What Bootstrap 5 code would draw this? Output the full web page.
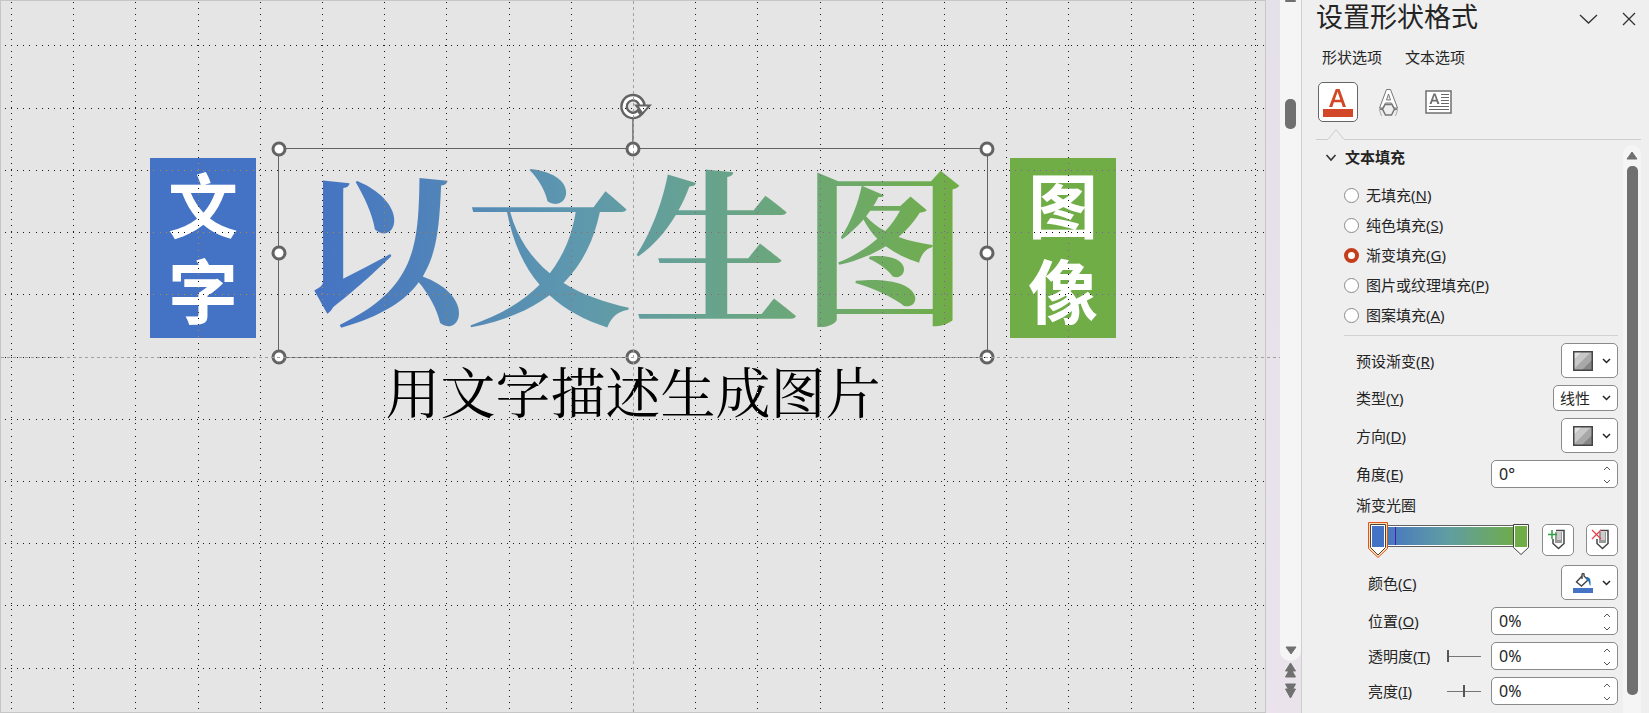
<!DOCTYPE html>
<html lang="zh-CN">
<head>
<meta charset="utf-8">
<meta name="viewport" content="width=device-width, initial-scale=1">
<title>设置形状格式</title>
<link href="https://cdn.jsdelivr.net/npm/bootstrap@5.3.0/dist/css/bootstrap.min.css" rel="stylesheet">
<style>
body{font-family:"Noto Sans","Noto Sans CJK SC",sans-serif;font-size:15px;line-height:20px;color:#242424;background:#efefef}
svg{display:block}
.slide{background:#e5e5e5;border:1px solid #c6c6c6;isolation:isolate;padding-top:147px;min-width:0}
.objects{gap:22px}
.tile{width:106px;height:180px;margin-top:10px;padding-top:2px;color:#fff;font-size:70px;line-height:86px;font-weight:700;font-family:"Noto Sans CJK SC",sans-serif}
.tile-blue{background:#4472c4}
.tile-green{background:#70ad47}
.selection{width:710px;height:210px;border:1px solid #636363}
.headline{font:700 168px/182px "Noto Serif CJK SC","Noto Sans CJK SC",serif;background:linear-gradient(90deg,#4472c4 4%,#5e98ae 42%,#67a38f 60%,#6fab60 85%,#70ad47 95%);-webkit-background-clip:text;background-clip:text;color:transparent}
.caption{font:400 55px/64px "Noto Serif CJK SC","Noto Sans CJK SC",serif;color:#000}
.grip{position:absolute;width:15px;height:15px;border:3px solid #636363;border-radius:50%;background:#fff;transform:translate(-50%,-50%)}
.turn{position:absolute;left:50%;bottom:100%;transform:translateX(-50%)}
.guides{position:absolute;inset:0;pointer-events:none}
.grid-dots{mix-blend-mode:difference}
.strip{width:35px;background:linear-gradient(#e5e1e9,#eae3eb)}
.strip-track{width:21px;background:#f5f5f5;border-radius:0 0 10px 10px;height:calc(100% - 52px)}
.thumb{width:11px;border-radius:5px;background:#707070}
.strip-thumb{height:30px;margin-top:97px}
.pane{width:348px;border-left:1px solid #cfcfcf;padding:0 8px 0 14px;background:#efefef}
.pane-title{font-size:27px;line-height:34px;font-weight:400;color:#242424}
.plain{background:none;border:0;padding:0;color:#242424}
.pane-tools{gap:24px;padding:3px 5px 0 0}
.pane-tabs{gap:23px;padding:11px 6px 0}
.pane-tabs a{color:#242424;text-decoration:none;line-height:24px}
.icon-row{margin-top:13px;padding-left:2px;gap:10px}
.icon-row button{width:40px;height:40px}
.icon-row button.current{background:#fff;border:1px solid #666;border-radius:5px}
.notch{margin-top:6px}
.section-title{font-size:15px;line-height:20px;font-weight:700;gap:7px;padding-left:9px;margin-top:7px}
.options{margin-left:28px;margin-right:5px}
.choices{margin-top:13px}
.form-check.choice{height:30px;min-height:30px;padding:0;margin:0;gap:7px}
.choice .form-check-input{float:none;margin:0;width:15px;height:15px;border:1px solid #8a8a8a;background:#fff}
.choice .form-check-input:checked{border:4px solid #c43e1c}
.rule{height:1px;background:#d1d1d1;margin:5px 0 7px}
.fields{gap:7px;padding-left:12px}
.sub{padding-left:12px}
.box{background:#fff;border:1px solid #8a8a8a;border-radius:5px;padding:0}
.drop{width:57px;height:35px;padding:0 6px 0 11px}
.form-select.kind{width:65px;height:26px;font-size:15px;line-height:20px;color:#242424;padding:0 20px 0 6px;border:1px solid #8a8a8a;border-radius:5px;background:#fff url("data:image/svg+xml,%3Csvg xmlns='http://www.w3.org/2000/svg' width='9' height='6'%3E%3Cpath d='M1 1l3.5 3.5L8 1' fill='none' stroke='%23242424' stroke-width='1.5'/%3E%3C/svg%3E") no-repeat right 6px center;background-size:9px 6px}
.spin{width:127px;height:28px}
.spin .form-control{height:28px;padding:0 24px 0 7px;font-size:16px;line-height:20px;color:#242424;border:1px solid #8a8a8a;border-radius:5px}
.arrows{position:absolute;right:7px;top:2px}
.arrows button{height:12px;width:8px;display:flex;align-items:center}
.arrows button+button{margin-top:1px}
.stops-row{gap:12px}
.stop-btn{width:32px;height:32px}
.level{appearance:none;width:34px;height:14px;margin:0 10px 0 0;background:linear-gradient(#767676,#767676) center/100% 1px no-repeat}
.level::-webkit-slider-thumb{-webkit-appearance:none;width:2px;height:12px;background:#555;border-radius:0}
.side-track{width:21px;background:#f5f5f5;border-radius:10px 10px 0 0;margin-top:5px;padding-bottom:18px}
</style>
</head>
<body>
<div class="d-flex vh-100 overflow-hidden">
  <main class="slide flex-fill position-relative">
    <div class="objects d-flex justify-content-center align-items-start">
      <div class="tile tile-blue text-center">文<br>字</div>
      <div class="selection position-relative text-center">
        <div class="headline">以文生图</div>
        <svg class="turn" width="38" height="58" viewBox="0 0 38 58">
          <path d="M19 28v30" stroke="#636363" stroke-width="1.500"/>
          <circle cx="19" cy="15.500" r="9.300" fill="none" stroke="#636363" stroke-width="7"/>
          <circle cx="19" cy="15.500" r="5" fill="#e5e5e5"/>
          <path d="M24.500 22.500a8.800 8.800 0 1 1 3.300-7" fill="none" stroke="#fff" stroke-width="3"/>
          <path d="M19 15.500a0 0 0 0 1 0 0" fill="none"/>
          <circle cx="19" cy="15.500" r="6" fill="none" stroke="#636363" stroke-width="2"/>
          <path d="M20 13.500h18L28.500 24z" fill="#636363"/>
          <path d="M25 15.500h8.500L28.500 21z" fill="#fff"/>
        </svg>
        <span class="grip start-0 top-0"></span><span class="grip start-50 top-0"></span><span class="grip start-100 top-0"></span>
        <span class="grip start-0 top-50"></span><span class="grip start-100 top-50"></span>
        <span class="grip start-0 top-100"></span><span class="grip start-50 top-100"></span><span class="grip start-100 top-100"></span>
      </div>
      <div class="tile tile-green text-center">图<br>像</div>
    </div>
    <div class="caption text-center">用文字描述生成图片</div>
    <svg class="guides grid-dots w-100 h-100" fill="none" stroke="#fff" stroke-dasharray="1 5 1 5 1 5 1 5 1 6" shape-rendering="crispEdges">
      <path d="M10.500 1V711M72.500 1V711M134.500 1V711M197.500 1V711M259.500 1V711M321.500 1V711M383.500 1V711M445.500 1V711M508.500 1V711M570.500 1V711M694.500 1V711M756.500 1V711M819.500 1V711M881.500 1V711M943.500 1V711M1005.500 1V711M1067.500 1V711M1130.500 1V711M1192.500 1V711M1254.500 1V711"/>
      <path d="M4 44.500H1263M4 107.500H1263M4 169.500H1263M4 231.500H1263M4 293.500H1263M4 356.500H1263M4 418.500H1263M4 480.500H1263M4 542.500H1263M4 604.500H1263M4 667.500H1263"/>
    </svg>
    <svg class="guides w-100 h-100 overflow-visible" fill="none" stroke="#a0a0a0" stroke-dasharray="3 3" shape-rendering="crispEdges">
      <path d="M632.500 0V711M0 356.500H1279"/>
    </svg>
  </main>

  <aside class="strip flex-shrink-0 d-flex flex-column align-items-end h-100">
    <div class="strip-track d-flex flex-column align-items-center">
      <div class="thumb" style="height:2px"></div>
      <div class="thumb strip-thumb"></div>
      <svg class="mt-auto mb-1" width="12" height="11" viewBox="0 0 12 11"><path d="M1 1h10L6 8z" fill="#707070" stroke="#707070" stroke-linejoin="round"/></svg>
    </div>
    <svg class="me-1" width="13" height="40" viewBox="0 0 13 40" fill="#707070" stroke="#707070" stroke-linejoin="round"><path d="M6.500 2l5 8h-10zM6.500 7l5 9h-10zM1.500 23h10l-5 9zM1.500 28h10l-5 9z"/></svg>
  </aside>

  <section class="pane flex-shrink-0 h-100 d-flex flex-column">
    <header class="d-flex align-items-center">
      <h1 class="pane-title mb-0 me-auto">设置形状格式</h1>
      <div class="pane-tools d-flex align-items-center">
        <button class="plain" aria-label="选项"><svg width="19" height="12" viewBox="0 0 19 12"><path d="M1 2l8.500 8L18 2" fill="none" stroke="#333" stroke-width="1.300"/></svg></button>
        <button class="plain" aria-label="关闭"><svg width="14" height="14" viewBox="0 0 14 14"><path d="M1 1l12 12M13 1L1 13" stroke="#333" stroke-width="1.300"/></svg></button>
      </div>
    </header>
    <nav class="pane-tabs d-flex"><a href="#">形状选项</a><a href="#">文本选项</a></nav>
    <div class="icon-row d-flex">
      <button class="plain current" aria-label="文本填充与轮廓">
        <svg width="38" height="38" viewBox="0 0 38 38"><path d="M10 24L16.800 6h3.800L27 24h-3.200l-1.600-4.700h-7.300L13.300 24zM15.800 16.700h5.500L18.600 8.800z" fill="#d24726"/><path d="M4 26h30v8H4z" fill="#d24726"/></svg>
      </button>
      <button class="plain" aria-label="文字效果">
        <svg class="mx-auto" width="26" height="40" viewBox="0 0 26 40" fill="#fff" stroke="#767676"><path d="M11.500 7.500h4L22.500 26h-4l-2-5h-6l-2 5h-4zM13.500 12l-2 6h4z"/><path d="M4.500 27l3 .500M22.500 27l-3 .500M10 22.500h7l2.500 4.500-3 6h-6l-3-6z" fill="none" stroke-width="1.500"/><path d="M4.500 28l2 6M22.500 28l-2 6" stroke="#aaa"/></svg>
      </button>
      <button class="plain" aria-label="文本框">
        <svg class="mx-auto" width="28" height="40" viewBox="0 0 28 40"><path d="M2 9h25v22H2z" fill="#fff" stroke="#707070" stroke-width="1.500"/><path d="M17 12.500h8M17 15.500h8M17 18.500h8M17 21.500h8M5 24.500h20M5 27.500h20" stroke="#666"/><path d="M5.500 22l4-10.500h2L15.500 22h-2.200l-.800-2.500H8.400L7.600 22zM9 17.800h3l-1.500-4.300z" fill="#707070"/></svg>
      </button>
    </div>
    <svg class="notch w-100 flex-shrink-0" height="12"><path d="M0 11.500H12L20 1.500L28 11.500H340" fill="none" stroke="#cdcdcd"/></svg>

    <div class="d-flex flex-fill">
      <div class="flex-fill">
        <h2 class="section-title d-flex align-items-center mb-0">
          <svg width="13" height="9" viewBox="0 0 13 9"><path d="M1.500 2L6 7l4.500-5" fill="none" stroke="#333" stroke-width="1.600"/></svg>文本填充
        </h2>
        <div class="options">
          <div class="choices">
            <div class="form-check choice d-flex align-items-center"><input class="form-check-input" type="radio" name="fill" id="f1"><label for="f1">无填充(<u>N</u>)</label></div>
            <div class="form-check choice d-flex align-items-center"><input class="form-check-input" type="radio" name="fill" id="f2"><label for="f2">纯色填充(<u>S</u>)</label></div>
            <div class="form-check choice d-flex align-items-center"><input class="form-check-input" style="background-image:none" type="radio" name="fill" id="f3" checked><label for="f3">渐变填充(<u>G</u>)</label></div>
            <div class="form-check choice d-flex align-items-center"><input class="form-check-input" type="radio" name="fill" id="f4"><label for="f4">图片或纹理填充(<u>P</u>)</label></div>
            <div class="form-check choice d-flex align-items-center"><input class="form-check-input" type="radio" name="fill" id="f5"><label for="f5">图案填充(<u>A</u>)</label></div>
          </div>
          <div class="rule"></div>
          <div class="fields d-flex flex-column">
            <div class="d-flex justify-content-between align-items-center"><label for="preset">预设渐变(<u>R</u>)</label>
              <button class="box drop d-flex align-items-center justify-content-between" id="preset">
                <svg width="20" height="20" viewBox="0 0 20 20"><path d="M0 0h20v20H0z" fill="#a8a8a8"/><path d="M0 0h10L0 10z" fill="#e2e2e2"/><path d="M10 0h9L0 19v-9z" fill="#c8c8c8"/><path d="M20 8v12H8z" fill="#868686"/><path d="M.75.75h18.500v18.500H.75z" fill="none" stroke="#444" stroke-width="1.500"/></svg>
                <svg width="9" height="6" viewBox="0 0 9 6"><path d="M1 1l3.500 3.500L8 1" fill="none" stroke="#242424" stroke-width="1.500"/></svg>
              </button></div>
            <div class="d-flex justify-content-between align-items-center"><label for="kind">类型(<u>Y</u>)</label>
              <select class="form-select kind" id="kind"><option>线性</option></select></div>
            <div class="d-flex justify-content-between align-items-center"><label for="dir">方向(<u>D</u>)</label>
              <button class="box drop d-flex align-items-center justify-content-between" id="dir">
                <svg width="20" height="20" viewBox="0 0 20 20"><path d="M0 0h20v20H0z" fill="#a8a8a8"/><path d="M0 0h10L0 10z" fill="#e2e2e2"/><path d="M10 0h9L0 19v-9z" fill="#c8c8c8"/><path d="M20 8v12H8z" fill="#868686"/><path d="M.75.75h18.500v18.500H.75z" fill="none" stroke="#444" stroke-width="1.500"/></svg>
                <svg width="9" height="6" viewBox="0 0 9 6"><path d="M1 1l3.500 3.500L8 1" fill="none" stroke="#242424" stroke-width="1.500"/></svg>
              </button></div>
            <div class="d-flex justify-content-between align-items-center"><label for="angle">角度(<u>E</u>)</label>
              <div class="spin position-relative"><input class="form-control" id="angle" value="0°"><div class="arrows"><button class="plain" aria-label="增加"><svg width="8" height="5"><path d="M1 4l3-3 3 3" fill="none" stroke="#555"/></svg></button><button class="plain" aria-label="减少"><svg width="8" height="5"><path d="M1 1l3 3 3-3" fill="none" stroke="#555"/></svg></button></div></div></div>
            <div>渐变光圈</div>
            <div class="stops-row sub d-flex align-items-center">
              <svg width="162" height="36" viewBox="0 0 162 36">
                <defs><linearGradient id="ramp"><stop offset="0" stop-color="#4472c4"/><stop offset=".500" stop-color="#609da2"/><stop offset="1" stop-color="#70ad47"/></linearGradient></defs>
                <path d="M10 3.500h140v21H10z" fill="#fff" stroke="#606060"/>
                <path d="M10 5h140v18H10z" fill="url(#ramp)"/>
                <path d="M27.500 5v18" stroke="#4a1cc0"/>
                <path d="M.500.500h19v26L10 35.500.500 26.500z" fill="#fbe0b0" stroke="#e8501c"/>
                <path d="M2.500 2.500h15v23L10 33l-7.500-7.500z" fill="#fff" stroke="#444"/>
                <path d="M4 4h12v21H4z" fill="#4472c4"/>
                <path d="M145.500 2.500h15v23l-7.500 7-7.500-7z" fill="#fff" stroke="#444"/>
                <path d="M147 4h12v21h-12z" fill="#70ad47"/>
              </svg>
              <button class="box stop-btn ms-auto" aria-label="添加渐变光圈"><svg width="30" height="30" viewBox="0 0 30 30"><path d="M12 7h7v11h-7z" fill="#999"/><path d="M14 7h4v8h-4z" fill="#ccc"/><path d="M13 5.500h8v13l-5.500 5-5.500-5V14" fill="none" stroke="#444" stroke-width="1.500"/><path d="M9 5v9M5 9.500h9" stroke="#2ea043" stroke-width="1.500"/></svg></button>
              <button class="box stop-btn" aria-label="删除渐变光圈"><svg width="30" height="30" viewBox="0 0 30 30"><path d="M12 7h7v11h-7z" fill="#999"/><path d="M14 7h4v8h-4z" fill="#ccc"/><path d="M13 5.500h8v13l-5.500 5-5.500-5V14" fill="none" stroke="#444" stroke-width="1.500"/><path d="M5 5l9 9M14 5l-9 9" stroke="#e8404a" stroke-width="1.300"/></svg></button>
            </div>
            <div class="sub d-flex justify-content-between align-items-center"><label for="color">颜色(<u>C</u>)</label>
              <button class="box drop d-flex align-items-center justify-content-between" id="color">
                <svg width="20" height="20" viewBox="0 0 20 20"><path d="M0 15h20v5H0z" fill="#4472c4"/><path d="M9 3l-5.500 6 5 4L15 7 11 3V1c-.500-1.500-2-.500-2 1v4" fill="#fff" stroke="#444" stroke-width="1.400"/><path d="M13 4c4 0 5 2 4.500 9-2-2-1-5-3.500-6z" fill="#2672b8"/></svg>
                <svg width="9" height="6" viewBox="0 0 9 6"><path d="M1 1l3.500 3.500L8 1" fill="none" stroke="#242424" stroke-width="1.500"/></svg>
              </button></div>
            <div class="sub d-flex justify-content-between align-items-center"><label for="pos">位置(<u>O</u>)</label>
              <div class="spin position-relative"><input class="form-control" id="pos" value="0%"><div class="arrows"><button class="plain" aria-label="增加"><svg width="8" height="5"><path d="M1 4l3-3 3 3" fill="none" stroke="#555"/></svg></button><button class="plain" aria-label="减少"><svg width="8" height="5"><path d="M1 1l3 3 3-3" fill="none" stroke="#555"/></svg></button></div></div></div>
            <div class="sub d-flex align-items-center"><label class="me-auto" for="alpha">透明度(<u>T</u>)</label><input class="level" type="range" value="0" aria-label="透明度">
              <div class="spin position-relative"><input class="form-control" id="alpha" value="0%"><div class="arrows"><button class="plain" aria-label="增加"><svg width="8" height="5"><path d="M1 4l3-3 3 3" fill="none" stroke="#555"/></svg></button><button class="plain" aria-label="减少"><svg width="8" height="5"><path d="M1 1l3 3 3-3" fill="none" stroke="#555"/></svg></button></div></div></div>
            <div class="sub d-flex align-items-center"><label class="me-auto" for="bright">亮度(<u>I</u>)</label><input class="level" type="range" value="50" aria-label="亮度">
              <div class="spin position-relative"><input class="form-control" id="bright" value="0%"><div class="arrows"><button class="plain" aria-label="增加"><svg width="8" height="5"><path d="M1 4l3-3 3 3" fill="none" stroke="#555"/></svg></button><button class="plain" aria-label="减少"><svg width="8" height="5"><path d="M1 1l3 3 3-3" fill="none" stroke="#555"/></svg></button></div></div></div>
          </div>
        </div>
      </div>
      <div class="side-track d-flex flex-column align-items-center">
        <svg class="flex-shrink-0 my-1" width="12" height="13" viewBox="0 0 12 13"><path d="M6 3l5 7H1z" fill="#707070" stroke="#707070" stroke-linejoin="round"/></svg>
        <div class="thumb flex-fill"></div>
      </div>
    </div>
  </section>
</div>
<script src="https://cdn.jsdelivr.net/npm/bootstrap@5.3.0/dist/js/bootstrap.bundle.min.js"></script>
</body>
</html>
